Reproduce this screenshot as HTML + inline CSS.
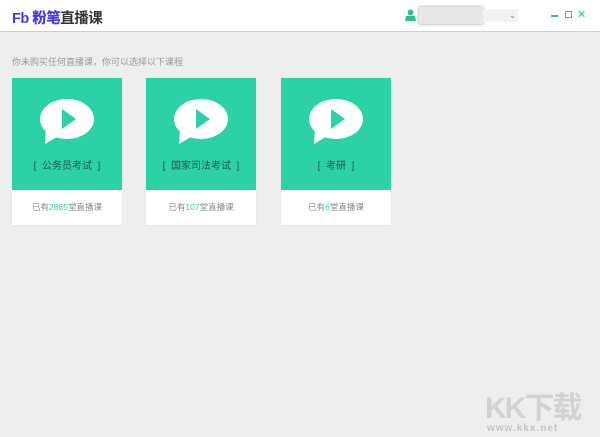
<!DOCTYPE html>
<html><head><meta charset="utf-8"><style>
body{margin:0;width:600px;height:437px;background:#eeeeee;font-family:"Liberation Sans","Noto Sans CJK SC",sans-serif;position:relative;overflow:hidden}
.hd{position:absolute;left:0;top:0;width:600px;height:31px;background:#fff;border-bottom:1px solid #cfcfcf}
.logo{position:absolute;left:12px;top:7px;font-size:14.5px;font-weight:bold;color:#333;letter-spacing:-0.5px}
.logo b{color:#4a3be0}
.tip{position:absolute;left:12px;top:55px;font-size:9px;color:#999}
.card{position:absolute;top:78px;width:110px;height:147px;background:#fff;box-shadow:0 0 1px #ccc}
.top{height:112px;background:#2dd1a6;position:relative}
.top svg{position:absolute;left:26px;top:21px}
.lbl{position:absolute;left:0;right:0;top:79px;text-align:center;color:#1c5a48;font-size:10px;white-space:pre}
.bot{text-align:center;font-size:8.5px;color:#888;line-height:35px}
.bot span{color:#2dd1a6}
.wm{position:absolute;left:485px;top:383px;font-size:30px;color:#d2d2d2;font-weight:bold;letter-spacing:-2px}
.wm2{position:absolute;left:487px;top:423px;font-size:10px;color:#c4c4c4;font-weight:bold;letter-spacing:1px}
</style></head><body>
<div class="hd">
<div class="logo"><b>Fb 粉笔</b>直播课</div>
<svg style="position:absolute;left:405px;top:9px" width="11" height="12"><circle cx="5.5" cy="3.5" r="3" fill="#2dc08d"/><path d="M0 12 L1 7 L10 7 L11 12Z" fill="#2dc08d"/></svg>
<div style="position:absolute;left:419px;top:7px;width:64px;height:17px;background:#e8e8e8;box-shadow:0 0 3px #999"></div>
<div style="position:absolute;left:483px;top:9px;width:35px;height:13px;background:#f2f2f2;font-size:8px;color:#888;text-align:right;line-height:13px;padding-right:2px;box-sizing:border-box">⌄</div>
<div style="position:absolute;left:551px;top:15px;width:7px;height:1.5px;background:#2dc08d"></div>
<div style="position:absolute;left:565px;top:11px;width:5px;height:5px;border:1.5px solid #2dc08d"></div>
<div style="position:absolute;left:577px;top:8px;font-size:11px;color:#2dc08d">✕</div>
</div>
<div class="tip">你未购买任何直播课，你可以选择以下课程</div>

<div class="card" style="left:12px"><div class="top"><svg width="58" height="50"><ellipse cx="29" cy="20" rx="27" ry="20" fill="#fff"/><path d="M8 30 L7 45 L22 36Z" fill="#fff"/><path d="M24 10 L24 30 L38 20Z" fill="#2dd1a6"/></svg><div class="lbl">[  公务员考试  ]</div></div><div class="bot">已有<span>2885</span>堂直播课</div></div>
<div class="card" style="left:146px"><div class="top"><svg width="58" height="50"><ellipse cx="29" cy="20" rx="27" ry="20" fill="#fff"/><path d="M8 30 L7 45 L22 36Z" fill="#fff"/><path d="M24 10 L24 30 L38 20Z" fill="#2dd1a6"/></svg><div class="lbl">[  国家司法考试  ]</div></div><div class="bot">已有<span>107</span>堂直播课</div></div>
<div class="card" style="left:281px"><div class="top"><svg width="58" height="50"><ellipse cx="29" cy="20" rx="27" ry="20" fill="#fff"/><path d="M8 30 L7 45 L22 36Z" fill="#fff"/><path d="M24 10 L24 30 L38 20Z" fill="#2dd1a6"/></svg><div class="lbl">[  考研  ]</div></div><div class="bot">已有<span>6</span>堂直播课</div></div>

<div class="wm">KK下载</div>
<div class="wm2">www.kkx.net</div>
</body></html>
